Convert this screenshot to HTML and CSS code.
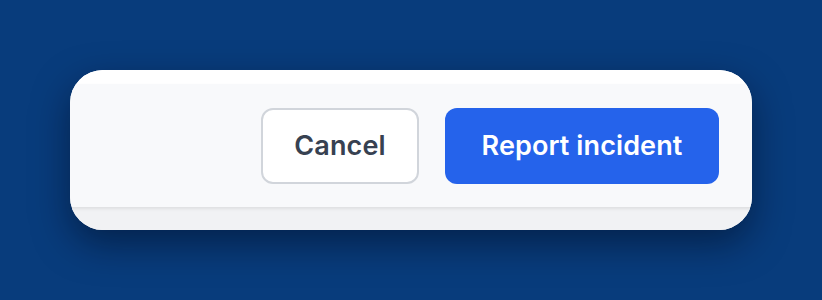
FILE: index.html
```html
<!DOCTYPE html>
<html>
<head>
<meta charset="utf-8">
<link rel="stylesheet" href="styles.css">
</head>
<body>
<div class="stage">
  <div class="card">
    <div class="card-top"></div>
    <div class="footer">
      <button class="btn btn-secondary">Cancel</button>
      <button class="btn btn-primary">Report incident</button>
    </div>
    <div class="card-bottom"></div>
  </div>
</div>
</body>
</html>
```
FILE: styles.css
```css
html, body {
  margin: 0;
  padding: 0;
}
body {
  width: 822px;
  height: 300px;
  background: #083c7c;
  font-family: Inter, "Noto Sans", sans-serif;
  overflow: hidden;
}
.stage {
  padding: 70px 0 0 70px;
}
.card {
  width: 682px;
  height: 160px;
  border-radius: 33px;
  background: #ffffff;
  overflow: hidden;
  display: flex;
  flex-direction: column;
  box-shadow: 0 14px 36px rgba(0, 10, 30, 0.5);
}
.card-top {
  height: 14px;
  background: #ffffff;
}
.footer {
  height: 123px;
  box-sizing: border-box;
  background: #f8f9fb;
  display: flex;
  justify-content: flex-end;
  align-items: center;
  gap: 26px;
  padding: 0 33px 0 0;
  box-shadow: 0 2px 3px rgba(0, 0, 0, 0.08);
  position: relative;
  z-index: 1;
}
.card-bottom {
  flex: 1;
  background: #f1f2f4;
}
.btn {
  height: 76px;
  box-sizing: border-box;
  border-radius: 12px;
  font-family: Inter, "Noto Sans", sans-serif;
  font-size: 27px;
  font-weight: 600;
  letter-spacing: 0.1px;
  padding: 0;
  cursor: pointer;
}
.btn-secondary {
  width: 158px;
  background: #ffffff;
  border: 2px solid #d1d5db;
  color: #374151;
}
.btn-primary {
  width: 274px;
  background: #2563eb;
  border: none;
  color: #ffffff;
}
```
